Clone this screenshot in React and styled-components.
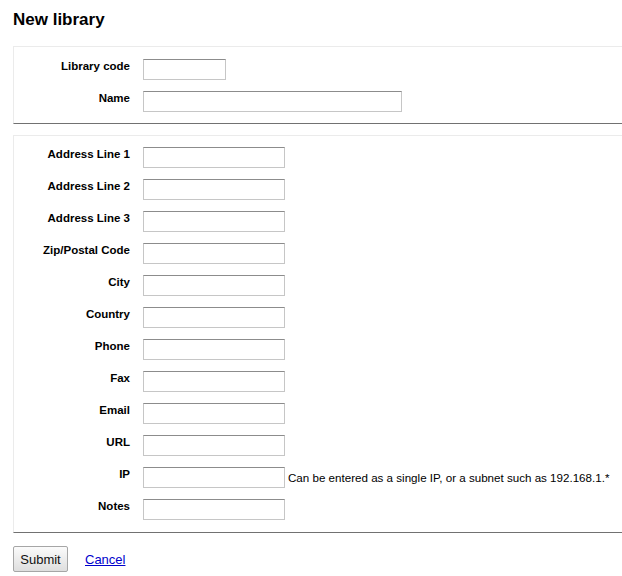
import React from "react"
import styled, { createGlobalStyle } from "styled-components"

const GlobalStyle = createGlobalStyle`
  html, body {
    margin: 0;
    padding: 0;
    background: #fff;
  }
  body {
    font-family: "Liberation Sans", Arial, sans-serif;
    color: #000;
  }
`

const Page = styled.div`
  padding: 0 0 0 13px;
  width: 622px;
  box-sizing: border-box;
`

const Title = styled.h1`
  margin: 0;
  padding-top: 10px;
  font-size: 17px;
  line-height: 20px;
  font-weight: bold;
`

const Fieldset = styled.fieldset`
  margin: ${(p) => p.$top}px 0 0 0;
  padding: ${(p) => p.$padTop}px 0 ${(p) => p.$padBottom}px 0;
  border: none;
  border-top: 1px solid #ebebeb;
  border-left: 1px solid #ebebeb;
  border-bottom: 1px solid #717171;
  min-width: 0;
`

const Rows = styled.ol`
  list-style: none;
  margin: 0;
  padding: 0;
  display: flex;
  flex-direction: column;
  gap: 11px;
`

const Row = styled.li`
  display: flex;
  align-items: flex-start;
  height: 21px;
`

const Label = styled.label`
  width: 116px;
  flex: none;
  margin-right: 13px;
  text-align: right;
  font-size: 11.5px;
  line-height: 14px;
  font-weight: bold;
  white-space: nowrap;
`

const Input = styled.input`
  box-sizing: border-box;
  width: ${(p) => p.$w}px;
  height: 21px;
  margin: 0;
  padding: 1px 3px;
  border: 1px solid #c6c6c6;
  border-top-color: #8c8c8c;
  background: #fff;
  font-family: "Liberation Sans", Arial, sans-serif;
  font-size: 12px;
  flex: none;
`

const Hint = styled.span`
  margin-left: 3px;
  font-size: 11.6px;
  line-height: 21px;
  white-space: nowrap;
`

const Actions = styled.div`
  display: flex;
  align-items: center;
  gap: 17px;
  margin-top: 13px;
`

const Button = styled.button`
  box-sizing: border-box;
  width: 55px;
  height: 26px;
  padding: 0;
  border: 1px solid #a6a6a6;
  border-radius: 2px;
  background: linear-gradient(#fbfbfb, #dedede);
  font-family: "Liberation Sans", Arial, sans-serif;
  font-size: 13px;
  color: #111;
`

const Link = styled.a`
  color: #0000cc;
  font-size: 13px;
  text-decoration: underline;
`

const addressFields = [
  "Address Line 1",
  "Address Line 2",
  "Address Line 3",
  "Zip/Postal Code",
  "City",
  "Country",
  "Phone",
  "Fax",
  "Email",
  "URL",
  "IP",
  "Notes"
]

const App = () => (
  <Page>
    <GlobalStyle />
    <Title>New library</Title>
    <Fieldset $top={16} $padTop={12} $padBottom={11}>
      <Rows>
        <Row>
          <Label>Library code</Label>
          <Input $w={83} />
        </Row>
        <Row>
          <Label>Name</Label>
          <Input $w={259} />
        </Row>
      </Rows>
    </Fieldset>
    <Fieldset $top={11} $padTop={11} $padBottom={12}>
      <Rows>
        {addressFields.map((name) => (
          <Row key={name}>
            <Label>{name}</Label>
            <Input $w={142} />
            {name === "IP" && (
              <Hint>Can be entered as a single IP, or a subnet such as 192.168.1.*</Hint>
            )}
          </Row>
        ))}
      </Rows>
    </Fieldset>
    <Actions>
      <Button>Submit</Button>
      <Link href="#">Cancel</Link>
    </Actions>
  </Page>
)

export default App
